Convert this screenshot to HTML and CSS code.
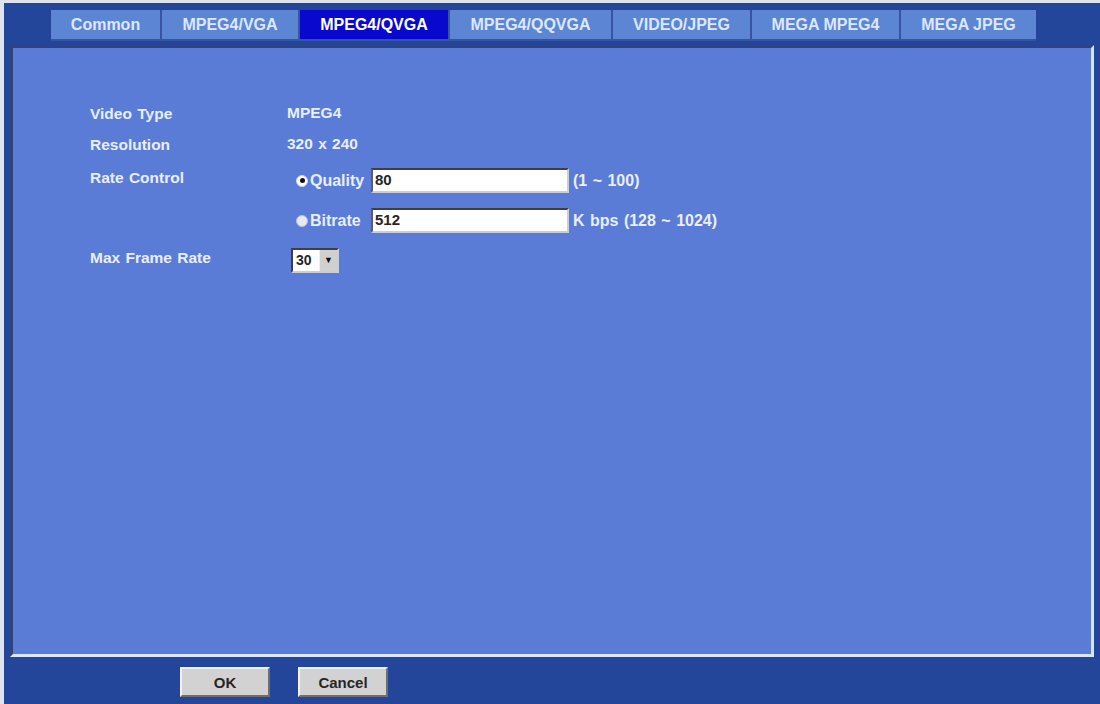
FILE: index.html
```html
<!DOCTYPE html>
<html lang="en">
<head>
    <meta charset="UTF-8">
    <title>Video Settings | MPEG4/QVGA</title>
    <link rel="stylesheet" href="styles.css">
</head>
<body>
    <div class="frame">
        <!-- tab bar -->
        <ul class="tabs">
            <li class="tab">Common</li>
            <li class="tab">MPEG4/VGA</li>
            <li class="tab active">MPEG4/QVGA</li>
            <li class="tab">MPEG4/QQVGA</li>
            <li class="tab">VIDEO/JPEG</li>
            <li class="tab">MEGA MPEG4</li>
            <li class="tab">MEGA JPEG</li>
        </ul>

        <!-- settings panel -->
        <div class="panel">
            <div class="row row-info">
                <div class="label">Video Type</div>
                <div class="value">MPEG4</div>
            </div>
            <div class="row row-info row-last">
                <div class="label">Resolution</div>
                <div class="value">320 x 240</div>
            </div>
            <div class="row">
                <div class="label">Rate Control</div>
                <div class="options">
                    <div class="option">
                        <span class="choice"><span class="radio checked"></span>Quality</span>
                        <span class="field">80</span>
                        <span class="hint">(1 ~ 100)</span>
                    </div>
                    <div class="option">
                        <span class="choice"><span class="radio"></span>Bitrate</span>
                        <span class="field">512</span>
                        <span class="hint">K bps (128 ~ 1024)</span>
                    </div>
                </div>
            </div>
            <div class="row">
                <div class="label">Max Frame Rate</div>
                <div class="select">
                    <span class="select-value">30</span>
                    <span class="select-btn">&#9660;</span>
                </div>
            </div>
        </div>

        <!-- buttons -->
        <div class="actions">
            <button class="btn">OK</button>
            <button class="btn">Cancel</button>
        </div>
    </div>
</body>
</html>
```

FILE: styles.css
```css
:root {
    --outer: #23469a;
    --panel: #5b7cd6;
    --tab: #5c85d4;
    --tab-line: #37559f;
    --active: #0808cf;
    --text-light: #e8efff;
    --text-dark: #262626;
}

* {
    box-sizing: border-box;
    margin: 0;
    padding: 0;
}

body {
    font-family: 'Liberation Sans', Arial, sans-serif;
    font-weight: bold;
    background: #dfe3ec;
    width: 1100px;
    height: 704px;
    overflow: hidden;
}

.frame {
    margin-top: 3px;
    margin-left: 4px;
    height: 701px;
    background: var(--outer);
    padding-top: 7px;
}

/* tabs */
.tabs {
    list-style: none;
    display: flex;
    margin-left: 47px;
    height: 31px;
}

.tab {
    background: var(--tab);
    color: #dde8ff;
    font-size: 16px;
    line-height: 29px;
    padding: 0 10px;
    border-left: 2px solid var(--tab-line);
    border-bottom: 2px solid var(--tab-line);
    text-align: center;
}

.tab:first-child {
    border-left: none;
}

.tab:nth-child(1) { width: 109px; }
.tab:nth-child(2) { width: 138px; }
.tab:nth-child(3) { width: 150px; }
.tab:nth-child(4) { width: 163px; }
.tab:nth-child(5) { width: 139px; }
.tab:nth-child(6) { width: 149px; }
.tab:nth-child(7) { width: 137px; }

.tab.active {
    background: var(--active);
    color: #ffffff;
}

/* panel */
.panel {
    margin: 4px 0 0 6px;
    width: 1084px;
    height: 612px;
    background: var(--panel);
    border-top: 3px solid #2f447f;
    border-left: 3px solid #2f447f;
    border-right: 3px solid #d8e6ff;
    border-bottom: 3px solid #d8e6ff;
    padding: 56px 0 0 77px;
    color: var(--text-light);
    font-size: 15.5px;
    word-spacing: 1px;
}

.row {
    display: flex;
    align-items: flex-start;
}

.row-info {
    line-height: 18px;
    height: 31px;
}

.row-last {
    height: 33px;
}

.label {
    width: 197px;
    line-height: 18px;
    padding-top: 1px;
}

.options {
    display: flex;
    flex-direction: column;
    gap: 15px;
    margin-bottom: 15px;
    font-size: 16px;
}

.option {
    display: flex;
    align-items: center;
    height: 25px;
}

.choice {
    display: flex;
    align-items: center;
    width: 84px;
    padding-left: 9px;
    gap: 2px;
}

.radio {
    width: 12px;
    height: 12px;
    border-radius: 50%;
    background: #e6e9f2;
    border: 1px solid #b8c0d8;
    position: relative;
}

.radio.checked {
    background: #ffffff;
    border-color: #d0d6e8;
}

.radio.checked::after {
    content: "";
    position: absolute;
    left: 2.5px;
    top: 2.5px;
    width: 5px;
    height: 5px;
    border-radius: 50%;
    background: #111111;
}

.field {
    width: 198px;
    height: 25px;
    background: #ffffff;
    border-top: 2px solid #3c3f4a;
    border-left: 2px solid #5a5d68;
    border-right: 2px solid #c8cde0;
    border-bottom: 2px solid #c8cde0;
    color: var(--text-dark);
    font-size: 15px;
    line-height: 20px;
    padding-left: 2px;
}

.hint {
    margin-left: 4px;
}

/* select box */
.select {
    display: flex;
    margin-left: 4px;
    width: 48px;
    height: 25px;
    background: #ffffff;
    border-top: 2px solid #3c3f4a;
    border-left: 2px solid #3c3f4a;
    border-right: 2px solid #c8cde0;
    border-bottom: 2px solid #c8cde0;
    color: var(--text-dark);
    font-size: 14px;
}

.select-value {
    flex: 1;
    line-height: 21px;
    padding-left: 3px;
}

.select-btn {
    width: 18px;
    background: #d0d0d0;
    border-left: 1px solid #eeeeee;
    font-size: 9px;
    line-height: 21px;
    text-align: center;
    color: #111111;
}

/* buttons */
.actions {
    display: flex;
    gap: 28px;
    padding: 10px 0 0 176px;
}

.btn {
    width: 90px;
    height: 30px;
    background: #d2d2d2;
    border-top: 2px solid #f2f2f2;
    border-left: 2px solid #f2f2f2;
    border-right: 2px solid #6e6e6e;
    border-bottom: 2px solid #6e6e6e;
    font-family: 'Liberation Sans', Arial, sans-serif;
    font-weight: bold;
    font-size: 15px;
    color: var(--text-dark);
}
```
